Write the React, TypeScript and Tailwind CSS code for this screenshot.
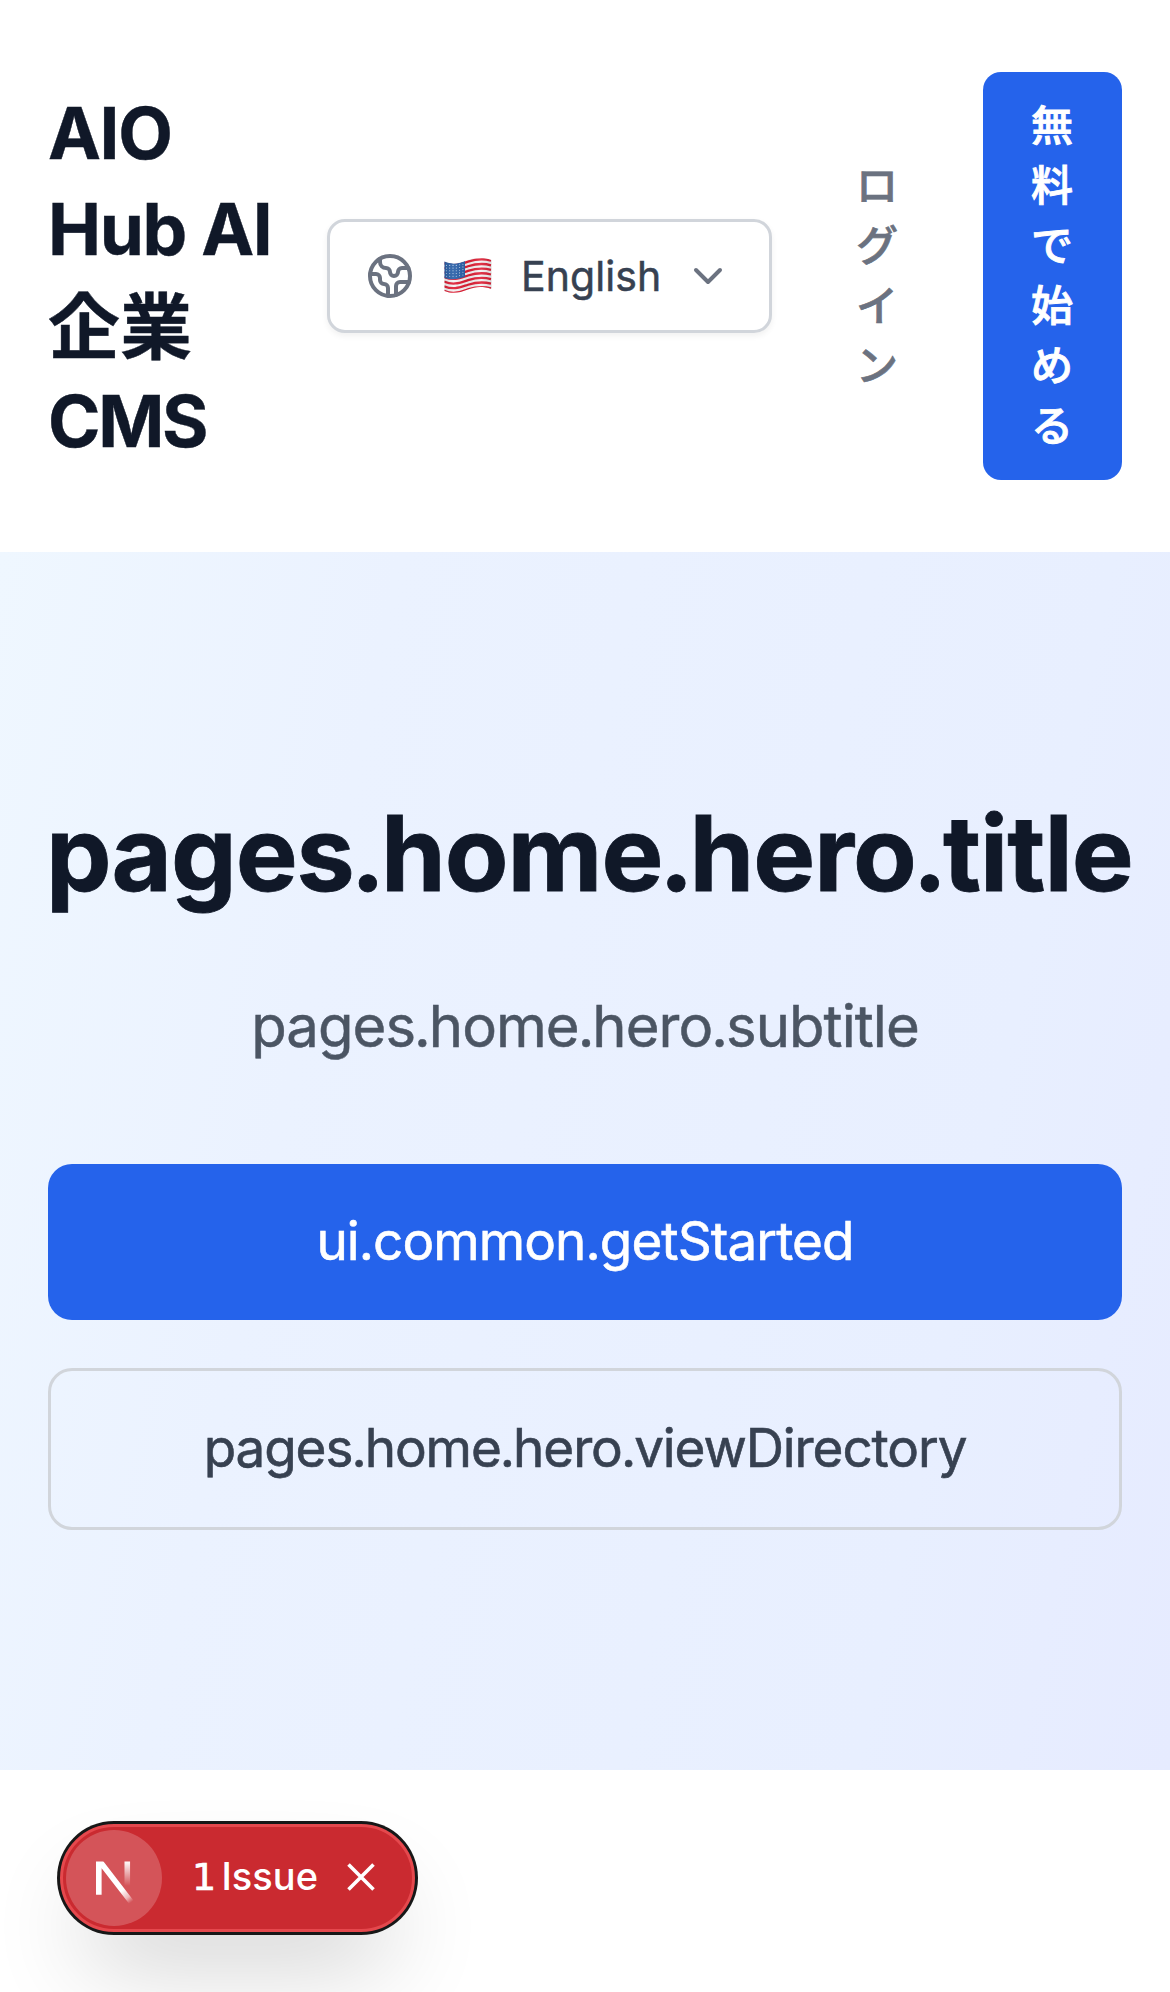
import React from "react";
import { ChevronDown, Earth } from "lucide-react";

function FlagUS() {
  const top = (o: number) => `M0 ${4 + o} C10 ${8 + o} 16 ${5 + o} 24 ${2.5 + o} S38 ${-1 + o} 47 ${1.5 + o}`;
  const stripe = 30 / 13;
  return (
    <svg width="48" height="35" viewBox="0 0 48 35" aria-label="United States">
      <defs>
        <clipPath id="flag">
          <path d="M0.5 3.5 C10 7.5 16 4.5 24 2 S38 -1.5 47.5 2 V31 C38 28 32 28.5 24 31.5 S9 36.5 0.5 33 Z" />
        </clipPath>
        <linearGradient id="shade" x1="0" x2="1" y1="0" y2="0">
          <stop offset="0" stopColor="#000" stopOpacity="0.12" />
          <stop offset="0.2" stopColor="#fff" stopOpacity="0.08" />
          <stop offset="0.5" stopColor="#000" stopOpacity="0.06" />
          <stop offset="0.75" stopColor="#fff" stopOpacity="0.1" />
          <stop offset="1" stopColor="#000" stopOpacity="0.12" />
        </linearGradient>
      </defs>
      <g clipPath="url(#flag)">
        <rect width="48" height="35" fill="#f4f2f3" />
        {[0, 2, 4, 6, 8, 10, 12].map((i) => (
          <path key={i} d={top(i * stripe + stripe / 2)} fill="none" stroke="#df1f35" strokeWidth={stripe} />
        ))}
        <path d="M0 2 C9 7.5 15 5.5 21 3 V18.8 C15 21 9 22.5 0 20 Z" fill="#2a60a8" />
        {[0, 1, 2, 3, 4].map((r) =>
          [0, 1, 2, 3, 4, 5].map((c) => (
            <circle key={`${r}-${c}`} cx={2.4 + c * 3.3} cy={7.4 + r * 2.7 - (c > 3 ? (c - 3) * 0.6 : 0)} r="0.55" fill="#c3d5ec" />
          ))
        )}
        <rect width="48" height="35" fill="url(#shade)" />
      </g>
    </svg>
  );
}

function NextMark() {
  return (
    <svg width="96" height="96" viewBox="0 0 32 32" fill="none">
      <defs>
        <linearGradient id="diagonal" gradientUnits="userSpaceOnUse" x1="9.95" y1="11.14" x2="13" y2="15.2">
          <stop stopColor="white" />
          <stop offset="0.6" stopColor="white" stopOpacity="0.6" />
          <stop offset="1" stopColor="white" stopOpacity="0" />
        </linearGradient>
        <linearGradient id="upright" gradientUnits="userSpaceOnUse" x1="11.82" y1="1.4" x2="11.8" y2="9.62">
          <stop stopColor="white" />
          <stop offset="1" stopColor="white" stopOpacity="0" />
        </linearGradient>
      </defs>
      <g transform="translate(8.6 9)">
        <path d="M13.3 15.2 L2.34 1 V12.6" stroke="url(#diagonal)" strokeWidth="1.86" clipPath="url(#mark)" />
        <path d="M11.825 1.5 V13.1" stroke="url(#upright)" strokeWidth="1.86" />
      </g>
      <clipPath id="mark">
        <rect x="0" y="1.5" width="15" height="15" />
      </clipPath>
    </svg>
  );
}

/* Renders a dotted key with tightened space around each dot. */
function DottedKey({ text, dot }: { text: string; dot: string }) {
  return (
    <>
      {text.split(".").map((part, i) => (
        <React.Fragment key={i}>
          {i > 0 && <span className={dot}>.</span>}
          {part}
        </React.Fragment>
      ))}
    </>
  );
}

function Header() {
  return (
    <header className="flex h-[552px] items-center bg-white px-12">
      <h1 className="w-[279px] pt-0.5 text-[71px] leading-[96px] font-bold tracking-[-1.4px] text-gray-900 [-webkit-text-stroke:0.4px]">
        AIO
        <br />
        Hub AI
        <br />
        <span className="align-[-2px] text-[72px] leading-none tracking-normal">企業</span>
        <br />
        <span className="tracking-[-2.3px]">CMS</span>
      </h1>
      <button className="flex h-[114px] w-[445px] shrink-0 items-center rounded-[18px] border-3 border-[#d1d5db] bg-white px-9 shadow-[0_3px_6px_rgba(0,0,0,0.06)]">
        <Earth size={48} strokeWidth={2} className="shrink-0 text-[#6b7280]" />
        <span className="ml-[30px] block pb-0.5">
          <FlagUS />
        </span>
        <span className="ml-[29px] text-[41px] leading-[60px] tracking-[0.1px] text-[#374151] [-webkit-text-stroke:0.5px]">English</span>
        <ChevronDown size={48} className="mr-px ml-auto shrink-0 text-[#6b7280]" />
      </button>
      <a className="ml-[84px] w-[43px] shrink-0 text-[42px] leading-[60px] font-medium break-all text-[#6b7280] [-webkit-text-stroke:0.7px]">
        ログイン
      </a>
      <a className="ml-[84px] h-[408px] w-[139px] shrink-0 rounded-[18px] bg-[#2563eb] px-12 pt-6 text-[42px] leading-[60px] font-medium break-all text-white [-webkit-text-stroke:0.9px]">
        無料で始める
      </a>
    </header>
  );
}

function Hero() {
  return (
    <section className="h-[1218px] bg-[linear-gradient(102deg,#eff7ff,#ebf2ff_28%,#e8efff_78%,#e6ebff)] px-12 py-60 text-center">
      <h2 className="-ml-0.5 pt-0.5 text-left text-[104px] leading-[118px] font-bold tracking-[-1px] whitespace-nowrap text-gray-900 [-webkit-text-stroke:0.8px]">
        <DottedKey text="pages.home.hero.title" dot="-mx-[3.3px]" />
      </h2>
      <p className="mt-[72px] text-[58px] leading-[84px] tracking-[-0.93px] text-[#4b5563] [-webkit-text-stroke:0.5px]">
        <DottedKey text="pages.home.hero.subtitle" dot="-mx-[1.1px]" />
      </p>
      <div className="mt-24 flex flex-col gap-12 text-[53px] leading-[84px] [-webkit-text-stroke:0.6px]">
        <a className="rounded-3xl bg-[#2563eb] pt-[35px] pb-[37px] tracking-[-0.93px] text-white">ui.common.getStarted</a>
        <a className="rounded-3xl border-3 border-[#d1d5db] pt-[35px] pb-[37px] tracking-[-1.1px] text-[#374151]">
          <DottedKey text="pages.home.hero.viewDirectory" dot="-mx-[0.9px]" />
        </a>
      </div>
    </section>
  );
}

function IssueBadge() {
  return (
    <div className="mt-[54px] ml-[60px] flex h-[108px] w-[355px] items-center rounded-full border-3 border-[#e5484d] bg-[#ca2a30] pl-[3px] shadow-[0_0_0_3px_#171717,0_48px_96px_-24px_rgba(0,0,0,0.24)]">
      <span className="size-24 shrink-0 rounded-full bg-white/20">
        <NextMark />
      </span>
      <span className="ml-[30px] flex items-baseline pb-1 text-[38px] leading-[60px] font-medium text-white">
        <span className="w-[29.5px] font-['DejaVu_Sans'] [-webkit-text-stroke:0.7px]">1</span>
        Issue
      </span>
      <svg width="28" height="28" viewBox="0 0 28 28" className="mb-0.5 ml-[29px]" stroke="white" strokeWidth="3.6">
        <path d="M1.5 1.5 L26.5 26.5 M26.5 1.5 L1.5 26.5" />
      </svg>
    </div>
  );
}

export default function App() {
  return (
    <div className="h-[1992px] w-[1170px] overflow-hidden bg-white font-['Inter','Noto_Sans_CJK_JP',sans-serif]">
      <Header />
      <Hero />
      <IssueBadge />
    </div>
  );
}
